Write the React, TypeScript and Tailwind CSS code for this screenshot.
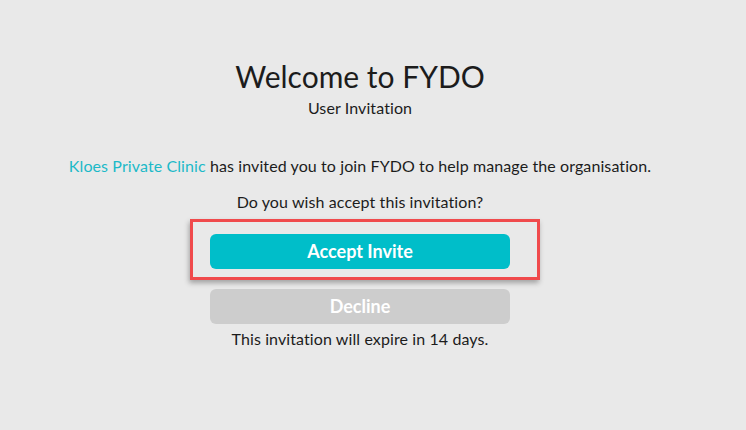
import React from "react";

export default function App() {
  return (
    <div
      className="w-[746px] h-[430px] bg-[#e9e9e9] text-[#1c1c1c]"
      style={{ fontFamily: "Lato, 'Open Sans', sans-serif" }}
    >
      <div className="w-[720px] flex flex-col items-center">
        <h1 className="mt-[58px] text-[30px] leading-[36px] font-normal">Welcome to FYDO</h1>
        <div className="mt-[4px] text-[16px] leading-[20px] tracking-[0.1px]">User Invitation</div>
        <p className="mt-[38px] text-[16px] leading-[20px] tracking-[0.1px]">
          <span className="text-[#1cb9c8]">Kloes Private Clinic</span> has invited you to join FYDO to help manage the organisation.
        </p>
        <p className="mt-[16px] text-[16px] leading-[20px] tracking-[0.1px]">Do you wish accept this invitation?</p>
        <div className="mt-[7px] ml-[10px] w-[350px] h-[61px] border-[3px] border-[#f04a4c] shadow-[-1px_3px_5px_rgba(0,0,0,0.3)] flex items-start pt-[12px] pl-[17px]">
          <button className="w-[300px] h-[35px] rounded-[6px] bg-[#00bec9] text-white font-bold text-[18px]">
            Accept Invite
          </button>
        </div>
        <button className="mt-[9px] w-[300px] h-[35px] rounded-[6px] bg-[#cdcdcd] text-white font-bold text-[18px]">
          Decline
        </button>
        <p className="mt-[4px] text-[16px] leading-[22px] tracking-[0.1px]">This invitation will expire in 14 days.</p>
      </div>
    </div>
  );
}
